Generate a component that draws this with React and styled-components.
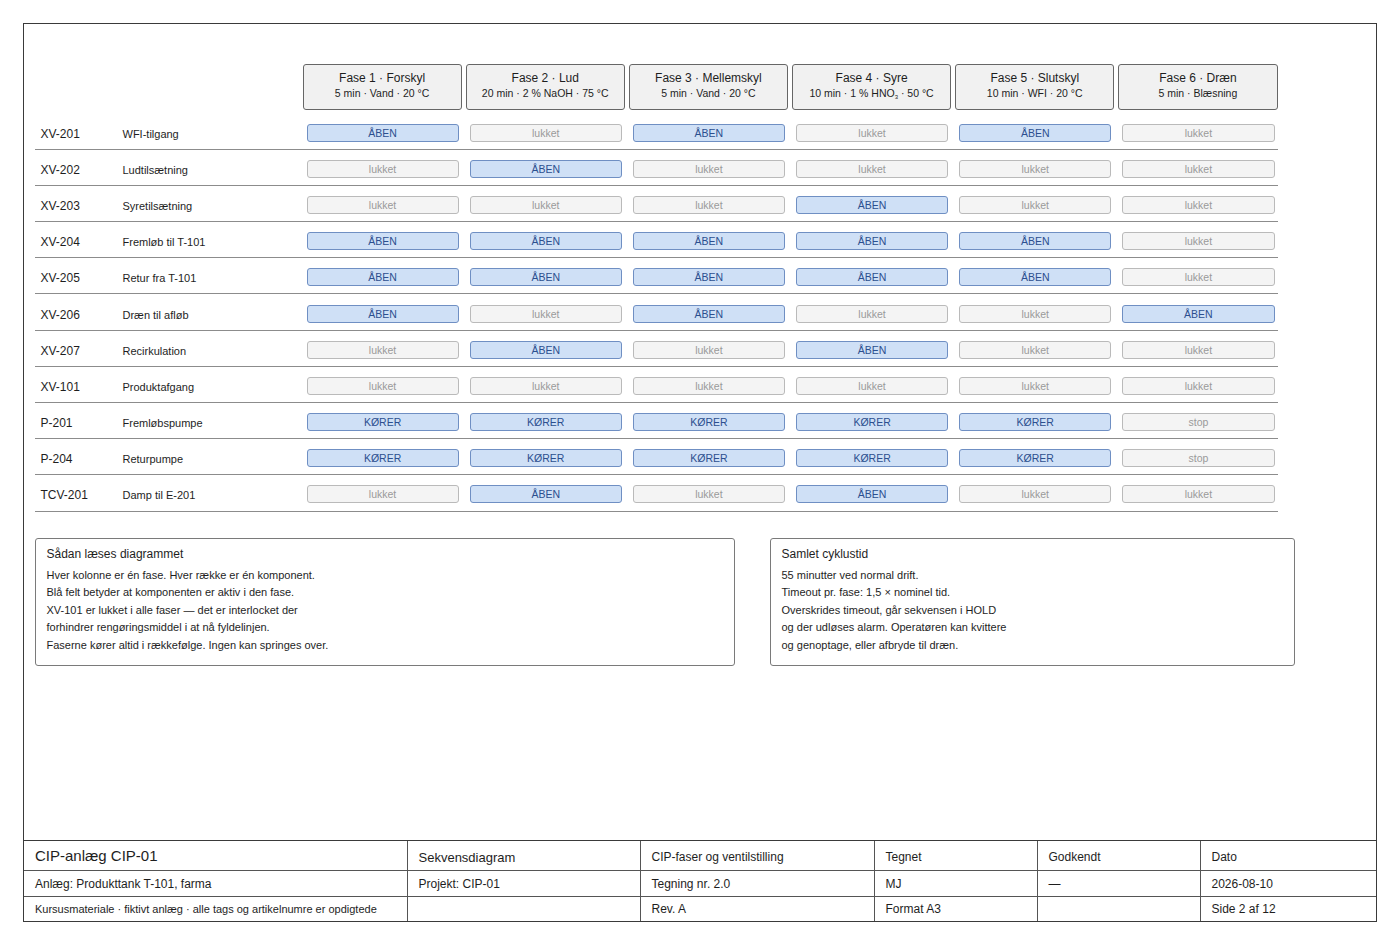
import React from 'react';
import styled, { createGlobalStyle } from 'styled-components';

const GlobalStyle = createGlobalStyle`
  html, body {
    margin: 0;
    padding: 0;
    background: #ffffff;
  }
  body {
    font-family: "Liberation Sans", Arial, Helvetica, sans-serif;
    color: #1e1e1e;
  }
`;

const Page = styled.div`
  padding: 23px;
  width: 1400px;
  height: 945px;
  box-sizing: border-box;
`;

const Frame = styled.div`
  width: 1354px;
  height: 899px;
  box-sizing: border-box;
  border: 1.5px solid #3a3a3a;
  display: flex;
  flex-direction: column;
`;

const Content = styled.div`
  flex: 1;
  padding: 39.5px 0 0 10.5px;
`;

const Matrix = styled.div`
  width: 1243px;
`;

const GridRow = styled.div`
  display: grid;
  grid-template-columns: 84px 176px repeat(6, 1fr);
  column-gap: 4px;
  align-items: center;
  box-sizing: border-box;
  height: ${(p) => (p.$head ? '46px' : '36.2px')};
  margin-bottom: ${(p) => (p.$head ? '4px' : '0')};
  border-bottom: ${(p) => (p.$head ? 'none' : '1px solid #8c8c8c')};
`;

const PhaseHead = styled.div`
  height: 46px;
  box-sizing: border-box;
  border: 1px solid #666;
  border-radius: 3px;
  background: #f1f1f1;
  display: flex;
  flex-direction: column;
  align-items: center;
  justify-content: center;
  gap: 2px;
  padding-bottom: 2px;
`;

const PhaseTitle = styled.div`
  font-size: 12px;
  line-height: 14px;
  color: #1e1e1e;
`;

const PhaseSub = styled.div`
  font-size: 10.5px;
  line-height: 13px;
  color: #1e1e1e;

  sub {
    font-size: 6px;
    vertical-align: -2px;
    line-height: 0;
  }
`;

const Tag = styled.div`
  font-size: 12px;
  padding-left: 6px;
  padding-top: 5px;
  color: #1e1e1e;
`;

const Desc = styled.div`
  font-size: 11px;
  padding-top: 5px;
  color: #1e1e1e;
`;

const State = styled.div`
  margin: 3px 3px 0 4px;
  height: 18px;
  box-sizing: border-box;
  border-radius: 3px;
  border: 1px solid ${(p) => (p.$on ? '#6f8fc3' : '#bababa')};
  background: ${(p) => (p.$on ? '#cfe0f6' : '#f4f4f4')};
  color: ${(p) => (p.$on ? '#2c4f8f' : '#9a9a9a')};
  font-size: 10.5px;
  line-height: 16px;
  text-align: center;
`;

const Notes = styled.div`
  display: flex;
  gap: 35px;
  margin-top: 26px;
`;

const NoteBox = styled.div`
  width: ${(p) => p.$w}px;
  height: 128px;
  box-sizing: border-box;
  border: 1px solid #7a7a7a;
  border-radius: 3px;
  padding: 7px 11px 0;
`;

const NoteTitle = styled.div`
  font-size: 12px;
  line-height: 16px;
  margin-bottom: 5px;
`;

const NoteLine = styled.div`
  font-size: 11px;
  line-height: 17.5px;
`;

const TitleBlock = styled.div`
  display: grid;
  grid-template-columns: 383.5px 233px 234px 163px 163px 1fr;
  grid-template-rows: 30px 26px 1fr;
  height: 81px;
  border-top: 1.5px solid #3a3a3a;
  box-sizing: border-box;
`;

const TCell = styled.div`
  display: flex;
  align-items: center;
  padding: ${(p) => (p.$top ? '3px 11px 0' : '0 11px')};
  font-size: ${(p) => p.$size || 12}px;
  border-right: ${(p) => (p.$last ? 'none' : '1px solid #555')};
  border-bottom: ${(p) => (p.$bottom ? 'none' : '1px solid #555')};
  color: #1e1e1e;
  white-space: nowrap;
`;

const phases = [
  { title: 'Fase 1 · Forskyl', sub: '5 min · Vand · 20 °C' },
  { title: 'Fase 2 · Lud', sub: '20 min · 2 % NaOH · 75 °C' },
  { title: 'Fase 3 · Mellemskyl', sub: '5 min · Vand · 20 °C' },
  {
    title: 'Fase 4 · Syre',
    sub: (
      <>
        10 min · 1 % HNO<sub>3</sub> · 50 °C
      </>
    ),
  },
  { title: 'Fase 5 · Slutskyl', sub: '10 min · WFI · 20 °C' },
  { title: 'Fase 6 · Dræn', sub: '5 min · Blæsning' },
];

// 1 = aktiv, 0 = passiv
const rows = [
  { tag: 'XV-201', desc: 'WFI-tilgang', s: [1, 0, 1, 0, 1, 0] },
  { tag: 'XV-202', desc: 'Ludtilsætning', s: [0, 1, 0, 0, 0, 0] },
  { tag: 'XV-203', desc: 'Syretilsætning', s: [0, 0, 0, 1, 0, 0] },
  { tag: 'XV-204', desc: 'Fremløb til T-101', s: [1, 1, 1, 1, 1, 0] },
  { tag: 'XV-205', desc: 'Retur fra T-101', s: [1, 1, 1, 1, 1, 0] },
  { tag: 'XV-206', desc: 'Dræn til afløb', s: [1, 0, 1, 0, 0, 1] },
  { tag: 'XV-207', desc: 'Recirkulation', s: [0, 1, 0, 1, 0, 0] },
  { tag: 'XV-101', desc: 'Produktafgang', s: [0, 0, 0, 0, 0, 0] },
  { tag: 'P-201', desc: 'Fremløbspumpe', s: [1, 1, 1, 1, 1, 0], pump: true },
  { tag: 'P-204', desc: 'Returpumpe', s: [1, 1, 1, 1, 1, 0], pump: true },
  { tag: 'TCV-201', desc: 'Damp til E-201', s: [0, 1, 0, 1, 0, 0] },
];

const stateLabel = (on, pump) => {
  if (pump) return on ? 'KØRER' : 'stop';
  return on ? 'ÅBEN' : 'lukket';
};

const readNotes = [
  'Hver kolonne er én fase. Hver række er én komponent.',
  'Blå felt betyder at komponenten er aktiv i den fase.',
  'XV-101 er lukket i alle faser — det er interlocket der',
  'forhindrer rengøringsmiddel i at nå fyldelinjen.',
  'Faserne kører altid i rækkefølge. Ingen kan springes over.',
];

const cycleNotes = [
  '55 minutter ved normal drift.',
  'Timeout pr. fase: 1,5 × nominel tid.',
  'Overskrides timeout, går sekvensen i HOLD',
  'og der udløses alarm. Operatøren kan kvittere',
  'og genoptage, eller afbryde til dræn.',
];

const titleRows = [
  [
    { t: 'CIP-anlæg CIP-01', size: 15 },
    { t: 'Sekvensdiagram', size: 13 },
    { t: 'CIP-faser og ventilstilling' },
    { t: 'Tegnet' },
    { t: 'Godkendt' },
    { t: 'Dato' },
  ],
  [
    { t: 'Anlæg: Produkttank T-101, farma' },
    { t: 'Projekt: CIP-01' },
    { t: 'Tegning nr. 2.0' },
    { t: 'MJ' },
    { t: '—' },
    { t: '2026-08-10' },
  ],
  [
    { t: 'Kursusmateriale · fiktivt anlæg · alle tags og artikelnumre er opdigtede', size: 11 },
    { t: '' },
    { t: 'Rev. A' },
    { t: 'Format A3' },
    { t: '' },
    { t: 'Side 2 af 12' },
  ],
];

export default function App() {
  return (
    <>
      <GlobalStyle />
      <Page>
        <Frame>
          <Content>
            <Matrix>
              <GridRow $head>
                <div />
                <div />
                {phases.map((p) => (
                  <PhaseHead key={p.title}>
                    <PhaseTitle>{p.title}</PhaseTitle>
                    <PhaseSub>{p.sub}</PhaseSub>
                  </PhaseHead>
                ))}
              </GridRow>
              {rows.map((r) => (
                <GridRow key={r.tag}>
                  <Tag>{r.tag}</Tag>
                  <Desc>{r.desc}</Desc>
                  {r.s.map((on, i) => (
                    <State key={i} $on={!!on}>
                      {stateLabel(on, r.pump)}
                    </State>
                  ))}
                </GridRow>
              ))}
            </Matrix>

            <Notes>
              <NoteBox $w={700}>
                <NoteTitle>Sådan læses diagrammet</NoteTitle>
                {readNotes.map((l) => (
                  <NoteLine key={l}>{l}</NoteLine>
                ))}
              </NoteBox>
              <NoteBox $w={525}>
                <NoteTitle>Samlet cyklustid</NoteTitle>
                {cycleNotes.map((l) => (
                  <NoteLine key={l}>{l}</NoteLine>
                ))}
              </NoteBox>
            </Notes>
          </Content>

          <TitleBlock>
            {titleRows.map((row, ri) =>
              row.map((c, ci) => (
                <TCell
                  key={`${ri}-${ci}`}
                  $size={c.size}
                  $top={ri === 0 && c.size !== 15}
                  $last={ci === row.length - 1}
                  $bottom={ri === titleRows.length - 1}
                >
                  {c.t}
                </TCell>
              ))
            )}
          </TitleBlock>
        </Frame>
      </Page>
    </>
  );
}
